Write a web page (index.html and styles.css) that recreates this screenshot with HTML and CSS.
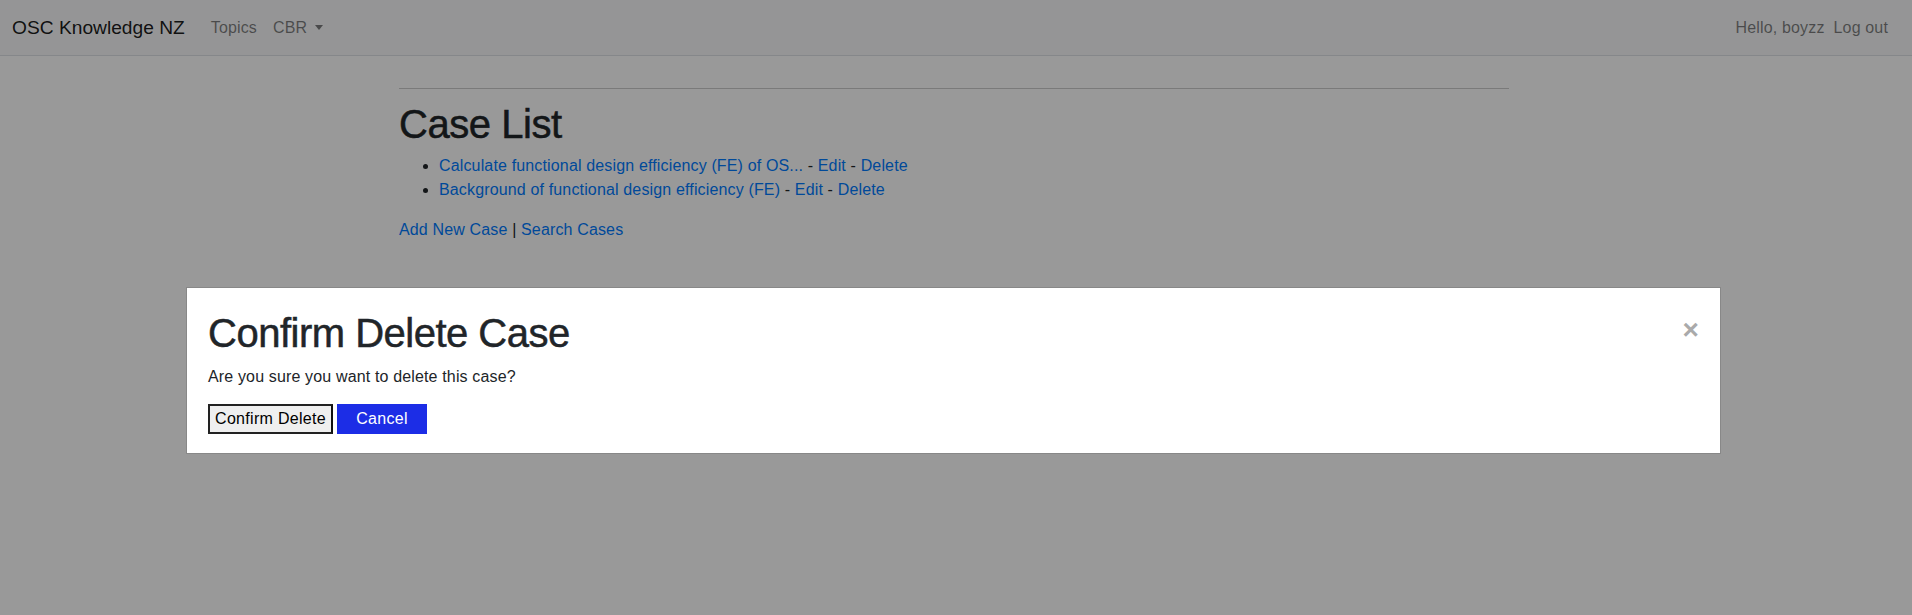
FILE: index.html
```html
<!DOCTYPE html>
<html lang="en">
<head>
<meta charset="utf-8">
<title>Case List</title>
<link rel="stylesheet" href="styles.css">
</head>
<body>
<nav class="navbar">
  <div class="nav-left">
    <a class="brand" href="#">OSC Knowledge NZ</a>
    <a class="nav-link" href="#">Topics</a>
    <a class="nav-link dropdown" href="#">CBR <span class="caret"></span></a>
  </div>
  <div class="nav-right">
    <span class="nav-link">Hello, boyzz</span>
    <a class="nav-link" href="#">Log out</a>
  </div>
</nav>
<main class="container">
  <hr class="rule">
  <h1 class="page-title">Case List</h1>
  <ul class="case-list">
    <li><a href="#">Calculate functional design efficiency (FE) of OS...</a> - <a href="#">Edit</a> - <a href="#">Delete</a></li>
    <li><a href="#">Background of functional design efficiency (FE)</a> - <a href="#">Edit</a> - <a href="#">Delete</a></li>
  </ul>
  <p class="actions"><a href="#">Add New Case</a> | <a href="#">Search Cases</a></p>
</main>
<div class="overlay">
  <div class="modal">
    <div class="modal-head">
      <h2 class="modal-title">Confirm Delete Case</h2>
      <span class="close">&times;</span>
    </div>
    <p class="modal-text">Are you sure you want to delete this case?</p>
    <div class="modal-buttons">
      <button class="btn-confirm">Confirm Delete</button>
      <button class="btn-cancel">Cancel</button>
    </div>
  </div>
</div>
</body>
</html>
```
FILE: styles.css
```css
html, body {
  margin: 0;
  padding: 0;
}
body {
  font-family: "Liberation Sans", Arial, sans-serif;
  font-size: 16px;
  line-height: 24px;
  letter-spacing: 0.15px;
  color: #212529;
  background: #ffffff;
  height: 615px;
  overflow: hidden;
}
a {
  color: #007bff;
  text-decoration: none;
}
.navbar {
  height: 56px;
  box-sizing: border-box;
  background: #f8f9fa;
  border-bottom: 1px solid #dee2e6;
  display: flex;
  align-items: center;
  justify-content: space-between;
  padding: 0 24px 0 12px;
}
.nav-left, .nav-right {
  display: flex;
  align-items: center;
}
.brand {
  font-size: 19.2px;
  letter-spacing: 0;
  color: rgba(0,0,0,0.9);
  margin-right: 26px;
}
.nav-link {
  color: rgba(0,0,0,0.5);
  margin-right: 16px;
}
.nav-right .nav-link {
  margin-right: 0;
  margin-left: 9px;
}
.dropdown {
  display: inline-flex;
  align-items: center;
}
.caret {
  display: inline-block;
  margin-left: 8px;
  border-top: 5px solid rgba(0,0,0,0.5);
  border-left: 4px solid transparent;
  border-right: 4px solid transparent;
}
.container {
  width: 1110px;
  margin: 0 auto;
  padding: 0 17px 0 13px;
  box-sizing: content-box;
}
.rule {
  margin: 32px 0 9px;
  border: 0;
  border-top: 1px solid rgba(0,0,0,0.2);
}
.page-title {
  margin: 0 0 8px;
  padding-top: 2px;
  font-size: 40px;
  line-height: 48px;
  font-weight: 400;
  letter-spacing: -0.45px;
  -webkit-text-stroke: 0.5px #212529;
}
.case-list {
  margin: -2px 0 16px;
  padding-left: 40px;
}
.actions {
  margin: 0;
}
.overlay {
  position: fixed;
  inset: 0;
  background: rgba(0,0,0,0.4);
}
.modal {
  position: absolute;
  left: 186px;
  top: 287px;
  width: 1535px;
  height: 167px;
  background: #fff;
  border: 1px solid #888;
  padding: 20px 21px;
  box-sizing: border-box;
}
.modal-head {
  display: flex;
  justify-content: space-between;
  align-items: flex-start;
}
.modal-title {
  margin: 0;
  padding-top: 1px;
  font-size: 40px;
  line-height: 48px;
  font-weight: 400;
  letter-spacing: -0.5px;
  -webkit-text-stroke: 0.5px #212529;
}
.close {
  color: #aaa;
  font-size: 28px;
  font-weight: 700;
  line-height: 28px;
  margin-top: 8px;
}
.modal-text {
  margin: 8px 0 15px;
}
.modal-buttons {
  display: flex;
  gap: 4px;
}
.btn-confirm {
  font-family: "Liberation Sans", Arial, sans-serif;
  font-size: 16px;
  letter-spacing: 0.3px;
  height: 30px;
  width: 125px;
  padding: 0;
  background: #efefef;
  color: #000;
  border: 2px solid #222;
  border-right-color: #111;
}
.btn-cancel {
  font-family: "Liberation Sans", Arial, sans-serif;
  font-size: 16px;
  letter-spacing: 0.3px;
  height: 30px;
  width: 90px;
  padding: 0;
  background: #1c2de6;
  color: #fff;
  border: 0;
}
```
